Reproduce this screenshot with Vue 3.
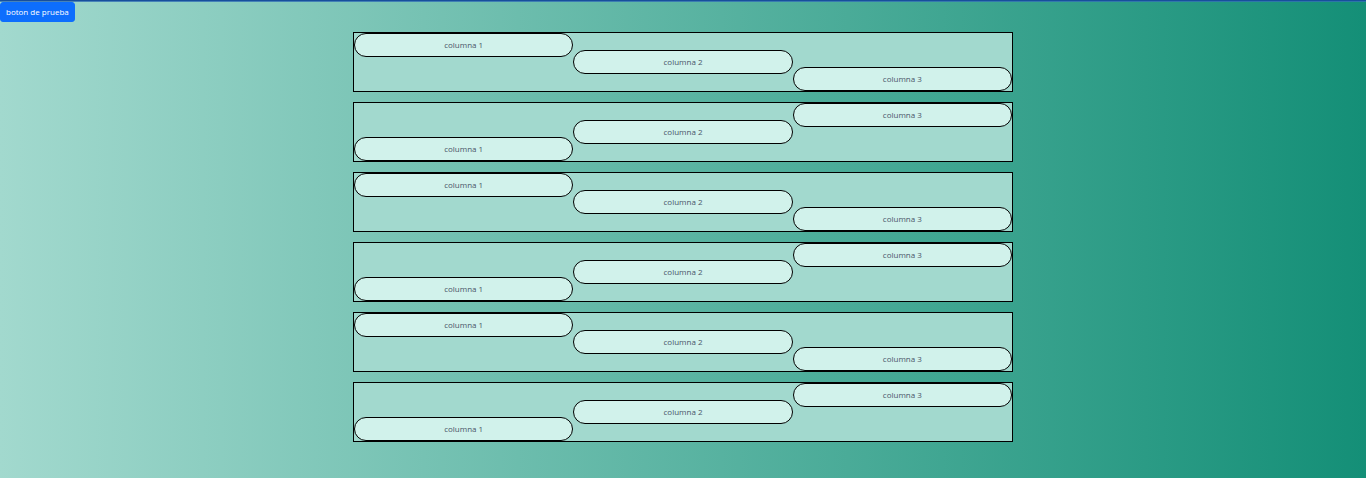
<script setup>
const rows = Array.from({ length: 6 }, (_, i) => ({ id: i, rising: i % 2 === 1 }))
</script>

<template>
  <main class="page">
    <button type="button" class="btn">boton de prueba</button>
    <div class="rows">
      <section v-for="row in rows" :key="row.id" class="row" :class="{ rising: row.rising }">
        <div v-for="n in 3" :key="n" class="col">columna {{ n }}</div>
      </section>
    </div>
  </main>
</template>

<style>
body {
  background: linear-gradient(to right, #a2d9ce, #148f77);
}
</style>

<style scoped>
.page {
  box-sizing: border-box;
  min-height: 100vh;
  border-top: 1px solid #174f9c;
  box-shadow: inset 0 1px rgba(50, 110, 180, 0.8);
  font-family: "Open Sans", sans-serif;
  font-size: 8px;
  line-height: 12px;
  color: #4a5568;
}
.btn {
  display: block;
  margin-top: 1px;
  padding: 3px 5px;
  border: 1px solid #0d6efd;
  border-radius: 3px;
  background: #0d6efd;
  color: #fff;
  font: inherit;
}
.rows {
  display: grid;
  gap: 10px;
  width: 660px;
  max-width: 100%;
  margin: 10px auto 0;
}
.row {
  box-sizing: border-box;
  display: flex;
  height: 60px;
  border: 1px solid #000;
  background: #a2d9ce;
}
.col {
  box-sizing: border-box;
  flex: 1;
  align-self: center;
  padding: 5px;
  border: 1px solid #000;
  border-radius: 12px;
  background: #d1f2eb;
  text-align: center;
}
.col:first-child,
.rising .col:last-child {
  align-self: flex-start;
}
.col:last-child,
.rising .col:first-child {
  align-self: flex-end;
}
</style>
